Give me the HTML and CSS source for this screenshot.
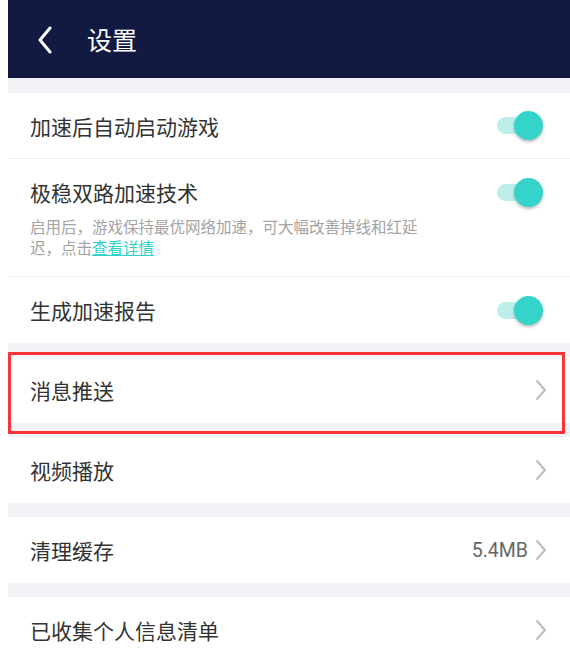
FILE: index.html
```html
<!DOCTYPE html>
<html lang="zh-CN">
<head>
    <meta charset="UTF-8">
    <title>设置</title>
    <meta name="viewport" content="width=device-width, initial-scale=1">
    <link rel="stylesheet" href="styles.css">
</head>
<body>
<div class="page">
    <header class="topbar">
        <svg class="back" width="16" height="28" viewBox="0 0 16 28"><polyline points="13,2 3,14 13,26" fill="none" stroke="#fff" stroke-width="3" stroke-linecap="round" stroke-linejoin="round"/></svg>
        <h1>设置</h1>
    </header>

    <div class="group">
        <div class="row line">
            <span class="label">加速后自动启动游戏</span>
            <span class="switch on"></span>
        </div>
        <div class="row tall line">
            <div class="text">
                <span class="label">极稳双路加速技术</span>
                <p class="desc">启用后，游戏保持最优网络加速，可大幅改善掉线和红延迟，点击<a href="#">查看详情</a></p>
            </div>
            <span class="switch on"></span>
        </div>
        <div class="row">
            <span class="label">生成加速报告</span>
            <span class="switch on"></span>
        </div>
    </div>

    <div class="group">
        <div class="row marked">
            <span class="label">消息推送</span>
            <svg class="arrow" width="12" height="22" viewBox="0 0 12 22"><polyline points="2,2 10,11 2,20" fill="none" stroke="#bcbcbc" stroke-width="2" stroke-linecap="round" stroke-linejoin="round"/></svg>
        </div>
    </div>

    <div class="group">
        <div class="row">
            <span class="label">视频播放</span>
            <svg class="arrow" width="12" height="22" viewBox="0 0 12 22"><polyline points="2,2 10,11 2,20" fill="none" stroke="#bcbcbc" stroke-width="2" stroke-linecap="round" stroke-linejoin="round"/></svg>
        </div>
    </div>

    <div class="group">
        <div class="row">
            <span class="label">清理缓存</span>
            <span class="extra">5.4MB
                <svg class="arrow" width="12" height="22" viewBox="0 0 12 22"><polyline points="2,2 10,11 2,20" fill="none" stroke="#bcbcbc" stroke-width="2" stroke-linecap="round" stroke-linejoin="round"/></svg>
            </span>
        </div>
    </div>

    <div class="group">
        <div class="row">
            <span class="label">已收集个人信息清单</span>
            <svg class="arrow" width="12" height="22" viewBox="0 0 12 22"><polyline points="2,2 10,11 2,20" fill="none" stroke="#bcbcbc" stroke-width="2" stroke-linecap="round" stroke-linejoin="round"/></svg>
        </div>
    </div>
</div>
</body>
</html>
```

FILE: styles.css
```css
html { overflow: hidden; }
body { margin: 0; padding: 0 0 0 8px; background: #fff; font-family: "Noto Sans CJK SC", Roboto, sans-serif; color: #333;}
.page { background: #f2f3f7; min-height: 700px;}
.topbar { height: 78px; background: #131a42; display: flex; align-items: center; padding-left: 29px;}
.topbar .back { display: block; margin-top: 1px;}
.topbar h1 { margin: 0 0 0 34px; font-size: 25px; font-weight: 400; color: #fff; line-height: 1;}
.group { margin-top: 14px; background: #fff;}
.group:first-of-type { margin-top: 15px;}
.row { height: 66px; display: flex; align-items: center; justify-content: space-between; padding: 0 23px 0 22px; box-sizing: border-box;}
.row.line { border-bottom: 1px solid #eef0f3;}
.row.tall { height: 118px; align-items: flex-start; padding-top: 18px;}
.label { font-size: 21px; line-height: 30px;}
.desc { margin: 9px 0 0 0; max-width: 396px; font-size: 15.5px; line-height: 21px; color: #a3a3a3;}
.desc a { color: #2ed1c7; text-decoration: underline; text-underline-offset: 1px;}
.switch { position: relative; width: 46px; height: 29px; margin-right: 4px; flex-shrink: 0;}
.switch::before { content: ""; position: absolute; left: 0; top: 6px; width: 38px; height: 17px; border-radius: 9px; background: #bdeeea;}
.switch::after { content: ""; position: absolute; right: 0; top: 0; width: 29px; height: 29px; border-radius: 50%; background: #34d4ca; box-shadow: 0 2px 3px rgba(0,0,0,0.25);}
.row.tall .switch { margin-top: 1px;}
.arrow { display: block; flex-shrink: 0;}
.extra { display: flex; align-items: center; gap: 7px; font-family: Roboto, sans-serif; font-size: 19.5px; color: #666;}
.marked { position: relative;}
.marked::after { content: ""; position: absolute; left: 0; right: 5px; top: -5px; bottom: -11px; border: 3px solid #f93438;}
```
